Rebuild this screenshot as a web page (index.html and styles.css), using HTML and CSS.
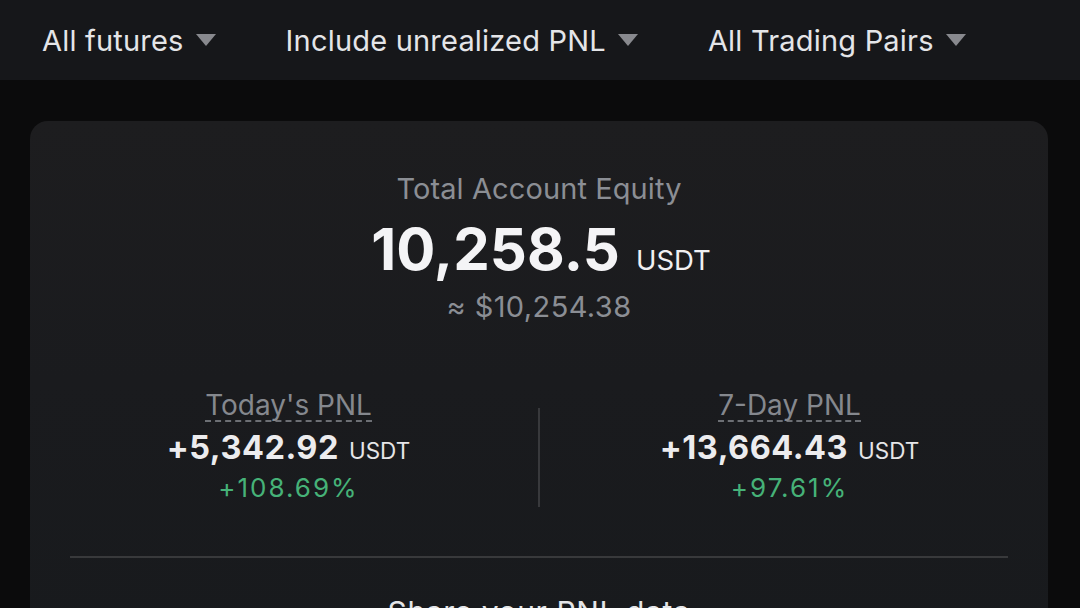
FILE: index.html
```html
<!DOCTYPE html>
<html lang="en">
<head>
<meta charset="utf-8">
<title>Futures PNL</title>
<link rel="stylesheet" href="styles.css">
</head>
<body>
<header class="filters">
  <div class="filter"><span>All futures</span><span class="caret"></span></div>
  <div class="filter"><span>Include unrealized PNL</span><span class="caret"></span></div>
  <div class="filter"><span>All Trading Pairs</span><span class="caret"></span></div>
</header>
<main class="page">
  <section class="card">
    <div class="equity">
      <div class="equity-label">Total Account Equity</div>
      <div class="equity-value"><span class="big">10,258.5</span><span class="unit">USDT</span></div>
      <div class="equity-fiat">≈ $10,254.38</div>
    </div>
    <div class="stats">
      <div class="stat">
        <div class="stat-label">Today's PNL</div>
        <div class="stat-value"><span class="num">+5,342.92</span><span class="unit-sm">USDT</span></div>
        <div class="stat-pct">+108.69%</div>
      </div>
      <div class="vdivider"></div>
      <div class="stat">
        <div class="stat-label">7-Day PNL</div>
        <div class="stat-value"><span class="num">+13,664.43</span><span class="unit-sm">USDT</span></div>
        <div class="stat-pct">+97.61%</div>
      </div>
    </div>
    <div class="hdivider"></div>
    <div class="share">Share your PNL data</div>
  </section>
</main>
</body>
</html>
```

FILE: styles.css
```css
* { box-sizing: border-box; }
html, body { margin: 0; padding: 0; }
body {
  background: #0b0b0c;
  font-family: "Inter", "Noto Sans", "Liberation Sans", sans-serif;
  color: #ececee;
  width: 1080px;
  height: 608px;
  overflow: hidden;
}
.filters {
  height: 80px;
  background: #16171a;
  display: flex;
  align-items: center;
  padding: 0 0 0 42px;
  gap: 70px;
}
.filter {
  display: flex;
  align-items: center;
  gap: 12px;
  font-size: 29px;
  color: #e4e5e8;
  letter-spacing: 0.2px;
}
.caret {
  width: 0;
  height: 0;
  border-left: 10px solid transparent;
  border-right: 10px solid transparent;
  border-top: 12px solid #88898e;
}
.page {
  padding: 41px 32px 0 30px;
}
.card {
  background: linear-gradient(180deg, #1d1d1f 0%, #1a1b1e 50%, #181a1d 100%);
  border-radius: 18px;
  padding: 48px 40px 0 40px;
  height: 520px;
}
.equity {
  display: flex;
  flex-direction: column;
  align-items: center;
}
.equity-label {
  font-size: 29px;
  color: #8b8e94;
  line-height: 40px;
  letter-spacing: 0.1px;
}
.equity-value {
  display: flex;
  align-items: baseline;
  gap: 16px;
  margin-top: 2px;
  padding-left: 4px;
}
.big {
  font-size: 58px;
  font-weight: 700;
  color: #f4f4f6;
  letter-spacing: 0.1px;
  line-height: 76px;
}
.unit {
  font-size: 27.5px;
  color: #f0f0f2;
  line-height: 1;
}
.equity-fiat {
  font-size: 29px;
  color: #8b8e94;
  line-height: 40px;
  letter-spacing: 0.4px;
}
.stats {
  display: grid;
  grid-template-columns: 1fr 2px 1fr;
  margin: 63px -31px 0 -31px;
}
.stat {
  display: flex;
  flex-direction: column;
  align-items: center;
}
.stat-label {
  font-size: 28px;
  color: #85888e;
  line-height: 30px;
  border-bottom: 2px dashed #6c6f74;
}
.stat-value {
  display: flex;
  align-items: baseline;
  gap: 10px;
  margin-top: 5px;
}
.num {
  font-size: 32.5px;
  font-weight: 700;
  color: #ececee;
  letter-spacing: 0.5px;
  line-height: 42px;
}
.unit-sm {
  font-size: 22.5px;
  color: #e6e6e8;
  line-height: 1;
}
.stat-pct {
  font-size: 26px;
  color: #46b278;
  line-height: 36px;
  letter-spacing: 2px;
  margin-top: 1px;
}
.vdivider {
  background: #38393c;
  height: 99px;
  margin-top: 18px;
}
.hdivider {
  height: 2px;
  background: #38393b;
  margin-top: 49px;
}
.share {
  margin-top: 36px;
  text-align: center;
  font-size: 30px;
  line-height: 36px;
  letter-spacing: 0.6px;
  color: #e4e5e8;
}
```
